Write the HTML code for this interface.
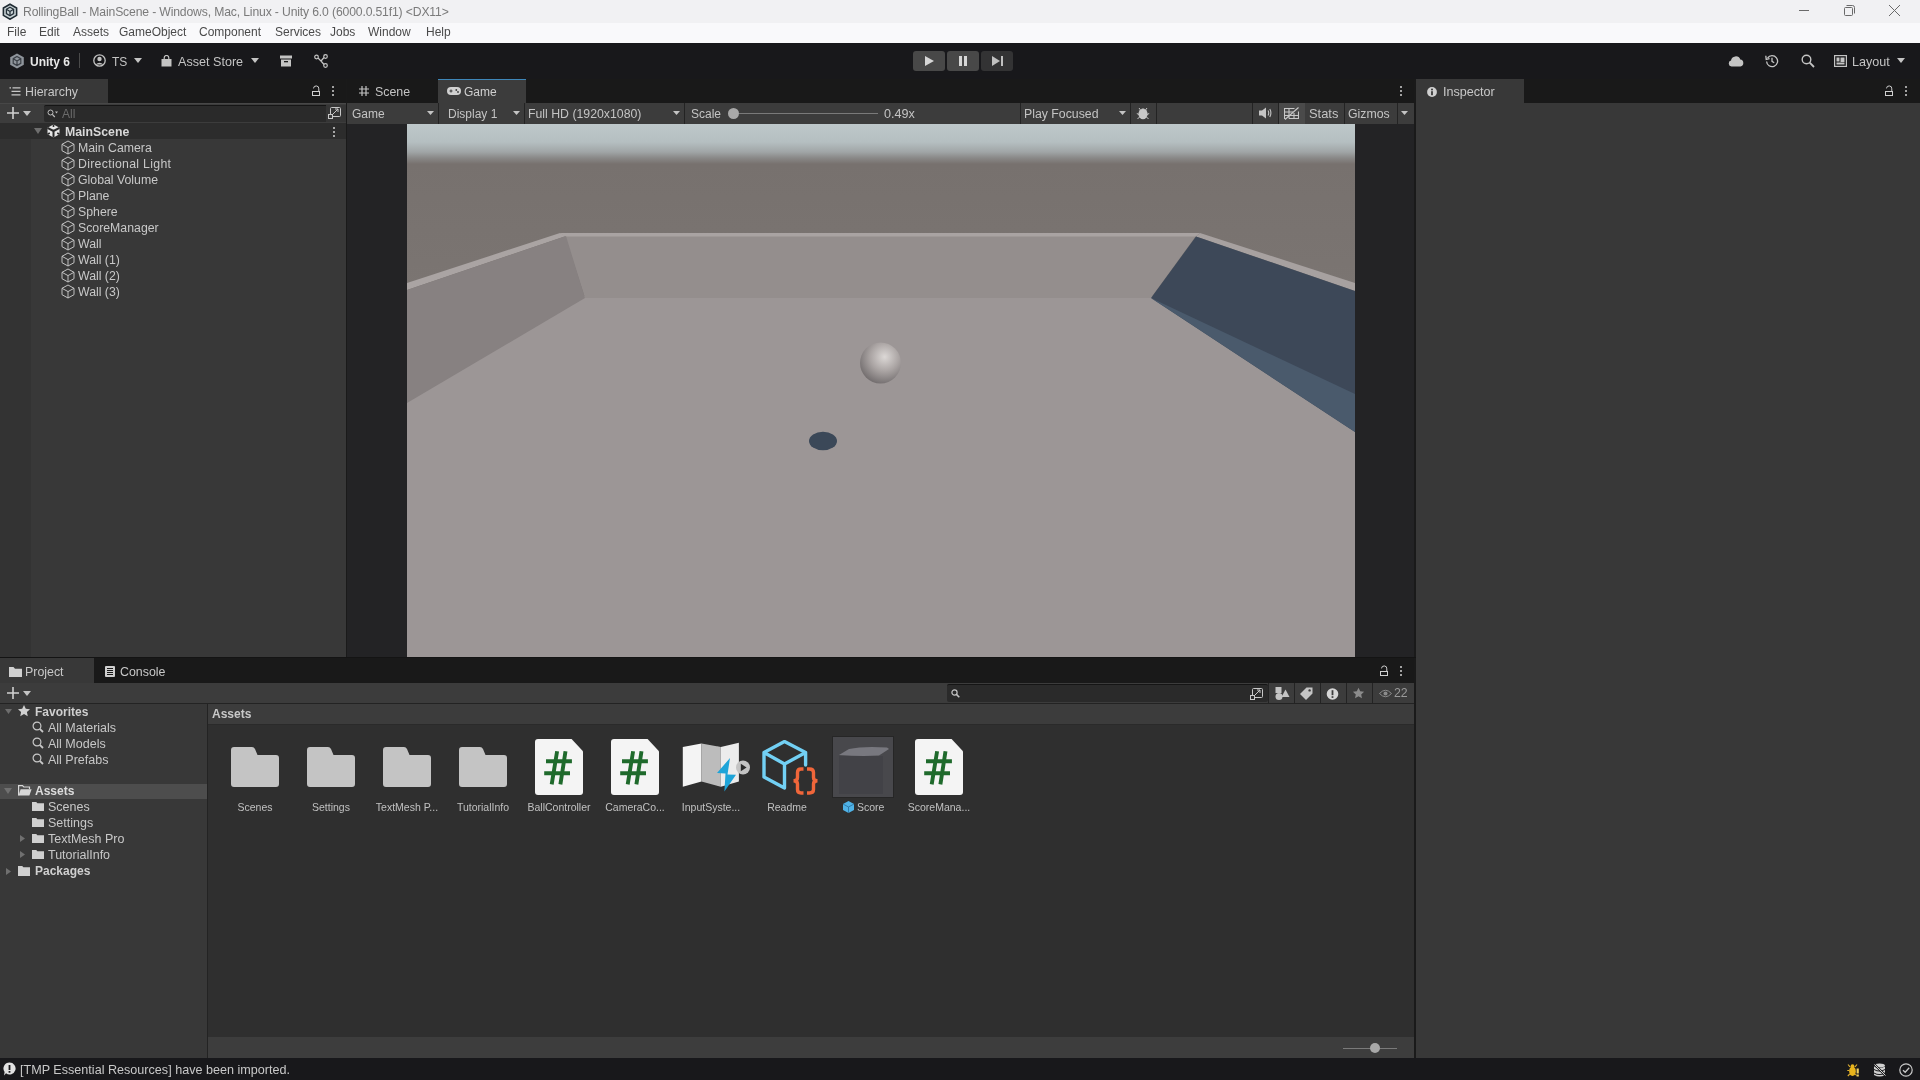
<!DOCTYPE html>
<html><head><meta charset="utf-8">
<style>
*{box-sizing:border-box;margin:0;padding:0}
html,body{-webkit-font-smoothing:antialiased;width:1920px;height:1080px;overflow:hidden;background:#191919;font-family:"Liberation Sans",sans-serif;font-size:12.5px;color:#c8c8c8}
.a{position:absolute}
.t{position:absolute;white-space:pre;line-height:14px;will-change:transform}
#title{left:0;top:0;width:1920px;height:23px;background:#f1f1f3}
#menu{left:0;top:23px;width:1920px;height:20px;background:#f9f9fb}
#toolbar{left:0;top:43px;width:1920px;height:36px;background:#18181b}
.tab{position:absolute;top:79px;height:24px;background:#383838}
.panelbg{background:#383838}
.tb{background:#3c3c3c}
.dots{width:2.4px;height:2.4px;border-radius:50%;background:#d0d0d0;box-shadow:0 4px 0 #d0d0d0,0 8px 0 #d0d0d0}
.sep{position:absolute;width:1px;background:#232323}
</style></head><body>
<!-- ============ TITLE BAR ============ -->
<div id="title" class="a"></div>
<svg class="a" style="left:2px;top:3px" width="16" height="17" viewBox="0 0 16 17">
 <path d="M8 1.2 L14.6 5 L14.6 12.4 L8 16.2 L1.4 12.4 L1.4 5 Z" fill="#c9d3d6" stroke="#1f2b33" stroke-width="1.6"/>
 <path d="M8 4.2 L11.6 6.3 L11.6 10.6 L8 12.7 L4.4 10.6 L4.4 6.3 Z" fill="none" stroke="#25313a" stroke-width="1.3"/>
 <path d="M8 8.5 L8 12.7 M8 8.5 L4.4 6.3 M8 8.5 L11.6 6.3" stroke="#25313a" stroke-width="1.3"/>
</svg>
<div class="t" style="left:23px;top:5px;font-size:12.2px;letter-spacing:-0.15px;color:#7a7a7a">RollingBall - MainScene - Windows, Mac, Linux - Unity 6.0 (6000.0.51f1) &lt;DX11&gt;</div>
<div class="a" style="left:1799px;top:10px;width:10px;height:1px;background:#6a6a6a"></div>
<svg class="a" style="left:1842px;top:4px" width="14" height="14" viewBox="0 0 14 14"><rect x="2.5" y="3.5" width="8" height="8" rx="1" fill="none" stroke="#6a6a6a"/><path d="M4.5 1.5 H10.5 A2 2 0 0 1 12.5 3.5 V9.5" fill="none" stroke="#6a6a6a"/></svg>
<svg class="a" style="left:1888px;top:4px" width="13" height="13" viewBox="0 0 13 13"><path d="M1 1 L12 12 M12 1 L1 12" stroke="#6a6a6a" stroke-width="1"/></svg>
<!-- ============ MENU ============ -->
<div id="menu" class="a"></div>
<div class="t" style="left:7px;top:25px;font-size:12px;color:#4a4a4a">File</div>
<div class="t" style="left:39px;top:25px;font-size:12px;color:#4a4a4a">Edit</div>
<div class="t" style="left:73px;top:25px;font-size:12px;color:#4a4a4a">Assets</div>
<div class="t" style="left:119px;top:25px;font-size:12px;color:#4a4a4a">GameObject</div>
<div class="t" style="left:199px;top:25px;font-size:12px;color:#4a4a4a">Component</div>
<div class="t" style="left:275px;top:25px;font-size:12px;color:#4a4a4a">Services</div>
<div class="t" style="left:330px;top:25px;font-size:12px;color:#4a4a4a">Jobs</div>
<div class="t" style="left:368px;top:25px;font-size:12px;color:#4a4a4a">Window</div>
<div class="t" style="left:426px;top:25px;font-size:12px;color:#4a4a4a">Help</div>
<!-- ============ TOOLBAR ============ -->
<div id="toolbar" class="a"></div>
<svg class="a" style="left:9px;top:53px" width="16" height="16" viewBox="0 0 16 16">
 <path d="M8 0.5 L14.8 4.3 L14.8 11.7 L8 15.5 L1.2 11.7 L1.2 4.3 Z" fill="#8f959c"/>
 <path d="M8 3.5 L11.8 5.7 L11.8 10.3 L8 12.5 L4.2 10.3 L4.2 5.7 Z M8 8 L8 12.5 M8 8 L4.2 5.7 M8 8 L11.8 5.7" fill="none" stroke="#3a3f46" stroke-width="1.2"/>
</svg>
<div class="t" style="left:30px;top:55px;font-size:12px;font-weight:bold;color:#e8e8e8">Unity 6</div>
<div class="a" style="left:79px;top:53px;width:1px;height:15px;background:#4a4a4a"></div>
<svg class="a" style="left:93px;top:54px" width="13" height="13" viewBox="0 0 13 13"><circle cx="6.5" cy="6.5" r="5.7" fill="none" stroke="#c4c4c4" stroke-width="1.3"/><circle cx="6.5" cy="5" r="2.2" fill="#c4c4c4"/><path d="M2.6 10.6 Q6.5 6.8 10.4 10.6" fill="#c4c4c4"/></svg>
<div class="t" style="left:112px;top:55px;font-size:12px;color:#c4c4c4">TS</div>
<svg class="a" style="left:134px;top:58px" width="8" height="5"><path d="M0 0 H8 L4 5 Z" fill="#c4c4c4"/></svg>
<svg class="a" style="left:161px;top:55px" width="11" height="12" viewBox="0 0 11 12"><path d="M3.2 4.5 V2.8 A2.3 2.3 0 0 1 7.8 2.8 V4.5" fill="none" stroke="#c4c4c4" stroke-width="1.2"/><path d="M0.5 4 H10.5 L10.5 11.5 H0.5 Z" fill="#c4c4c4"/></svg>
<div class="t" style="left:178px;top:55px;font-size:12.6px;color:#c4c4c4">Asset Store</div>
<svg class="a" style="left:251px;top:58px" width="8" height="5"><path d="M0 0 H8 L4 5 Z" fill="#c4c4c4"/></svg>
<svg class="a" style="left:280px;top:55px" width="12" height="12" viewBox="0 0 12 12"><rect x="0" y="0.5" width="12" height="3" fill="#c4c4c4"/><rect x="1" y="4.5" width="10" height="7" fill="#c4c4c4"/><rect x="4" y="6" width="4" height="1.3" fill="#191919"/></svg>
<svg class="a" style="left:314px;top:54px" width="14" height="14" viewBox="0 0 14 14"><circle cx="2.5" cy="3" r="1.8" fill="none" stroke="#c4c4c4" stroke-width="1.2"/><circle cx="11.5" cy="2.5" r="1.8" fill="none" stroke="#c4c4c4" stroke-width="1.2"/><circle cx="11.5" cy="11.5" r="1.8" fill="none" stroke="#c4c4c4" stroke-width="1.2"/><path d="M4 4 L7 7 L10 3.5 M7 7 L10 10.5" fill="none" stroke="#c4c4c4" stroke-width="1.2"/></svg>
<!-- play buttons -->
<div class="a" style="left:913px;top:51px;width:32px;height:20px;background:#484848;border-radius:3px"></div>
<div class="a" style="left:947px;top:51px;width:32px;height:20px;background:#484848;border-radius:3px"></div>
<div class="a" style="left:981px;top:51px;width:32px;height:20px;background:#333334;border-radius:3px"></div>
<svg class="a" style="left:925px;top:56px" width="9" height="10"><path d="M0 0 L9 5 L0 10 Z" fill="#d6d6d6"/></svg>
<div class="a" style="left:959px;top:56px;width:3px;height:10px;background:#d6d6d6"></div>
<div class="a" style="left:964px;top:56px;width:3px;height:10px;background:#d6d6d6"></div>
<svg class="a" style="left:992px;top:56px" width="11" height="10"><path d="M0 0 L8 5 L0 10 Z" fill="#c0c0c0"/><rect x="9" y="0" width="2" height="10" fill="#c0c0c0"/></svg>
<!-- right toolbar -->
<svg class="a" style="left:1728px;top:55px" width="16" height="12" viewBox="0 0 16 12"><path d="M3.5 11.5 A3 3 0 0 1 3 5.6 A4.8 4.8 0 0 1 12.3 4.6 A3.5 3.5 0 0 1 12.5 11.5 Z" fill="#c4c4c4"/></svg>
<svg class="a" style="left:1765px;top:54px" width="14" height="14" viewBox="0 0 14 14"><path d="M2.6 4 A5.5 5.5 0 1 1 1.6 7.5" fill="none" stroke="#c4c4c4" stroke-width="1.3"/><path d="M0.8 1.8 L1.2 5.4 L4.6 4.6" fill="none" stroke="#c4c4c4" stroke-width="1.3"/><path d="M7 3.8 V7.3 L9.2 8.8" fill="none" stroke="#c4c4c4" stroke-width="1.3"/></svg>
<svg class="a" style="left:1801px;top:54px" width="14" height="14" viewBox="0 0 14 14"><circle cx="5.5" cy="5.5" r="4.3" fill="none" stroke="#c4c4c4" stroke-width="1.4"/><path d="M8.7 8.7 L13 13" stroke="#c4c4c4" stroke-width="1.8"/></svg>
<svg class="a" style="left:1834px;top:55px" width="13" height="12" viewBox="0 0 13 12"><rect x="0.6" y="0.6" width="11.8" height="10.8" fill="none" stroke="#c4c4c4" stroke-width="1.2"/><rect x="2.5" y="2.5" width="3" height="4" fill="#c4c4c4"/><rect x="6.5" y="2.5" width="4" height="4.5" fill="#c4c4c4"/><rect x="2.5" y="7.5" width="8" height="2" fill="#c4c4c4"/></svg>
<div class="t" style="left:1852px;top:55px;font-size:12.6px;color:#c4c4c4">Layout</div>
<svg class="a" style="left:1897px;top:58px" width="8" height="5"><path d="M0 0 H8 L4 5 Z" fill="#c4c4c4"/></svg>

<!-- ============ HIERARCHY ============ -->
<div class="tab" style="left:0;width:108px"></div>
<svg class="a" style="left:9px;top:87px" width="12" height="9" viewBox="0 0 12 9"><path d="M0.5 0.8 H2 M3.5 0.8 H11.5 M2.5 4.3 H11.5 M2.5 7.8 H11.5" stroke="#c8c8c8" stroke-width="1.3"/></svg>
<div class="t" style="left:25px;top:85px;font-size:12.4px;color:#c8c8c8">Hierarchy</div>
<svg class="a" style="left:311px;top:85px" width="10" height="12" viewBox="0 0 10 12"><path d="M2.5 3.4 A2.65 2.65 0 0 1 7.8 3.8 V6.5" fill="none" stroke="#d0d0d0" stroke-width="1"/><rect x="1.5" y="6.5" width="7" height="4" fill="none" stroke="#d0d0d0" stroke-width="1"/></svg>
<div class="a dots" style="left:332px;top:85.5px"></div>
<div class="a panelbg" style="left:0;top:103px;width:346px;height:555px"></div>
<div class="a" style="left:0;top:139px;width:31px;height:519px;background:#333333"></div>
<div class="a" style="left:0;top:103px;width:346px;height:20px;background:#3c3c3c;border-top:1px solid #474747"></div>
<div class="a" style="left:346px;top:79px;width:1px;height:579px;background:#1a1a1a"></div>
<svg class="a" style="left:7px;top:107px" width="12" height="12" viewBox="0 0 12 12"><path d="M6 0 V12 M0 6 H12" stroke="#d0d0d0" stroke-width="1.6"/></svg>
<svg class="a" style="left:23px;top:111px" width="8" height="5"><path d="M0 0 H8 L4 5 Z" fill="#c4c4c4"/></svg>
<div class="a" style="left:44px;top:105px;width:282px;height:17px;background:#2a2a2a;border-top:1px solid #151515;border-radius:2px 0 0 2px"></div>
<svg class="a" style="left:47px;top:109px" width="11" height="9" viewBox="0 0 11 9"><circle cx="3.5" cy="3.5" r="2.5" fill="none" stroke="#bdbdbd" stroke-width="1"/><path d="M5.3 5.3 L7.8 8" stroke="#bdbdbd" stroke-width="1.2"/><path d="M8 2.6 H11 L9.5 4.4 Z" fill="#bdbdbd"/></svg>
<div class="t" style="left:62px;top:107px;font-size:12px;color:#6b6b6b">All</div>
<div class="a" style="left:326px;top:105px;width:20px;height:17px;background:#353535"></div>
<svg class="a" style="left:328px;top:107px" width="13" height="12" viewBox="0 0 13 12"><rect x="2.5" y="0.5" width="10" height="9" rx="1" fill="none" stroke="#c8c8c8" stroke-width="1"/><rect x="0.5" y="7.5" width="4" height="4" fill="#3c3c3c" stroke="#c8c8c8" stroke-width="1"/><path d="M5 7 L10 2 M7 2 H10 V5" fill="none" stroke="#c8c8c8" stroke-width="1"/></svg>
<!-- scene row -->
<div class="a" style="left:0;top:123px;width:346px;height:16px;background:#2c2c2c"></div>
<svg class="a" style="left:34px;top:128px" width="8" height="6"><path d="M0 0 H8 L4 6 Z" fill="#6e6e6e"/></svg>
<svg class="a" style="left:47px;top:124px" width="13" height="14" viewBox="0 0 13 14">
 <path d="M6.5 0.5 L12.5 3.8 L12.5 10.2 L6.5 13.5 L0.5 10.2 L0.5 3.8 Z" fill="#e6e6e6"/>
 <path d="M6.5 7 V13.5 M6.5 7 L0.5 3.8 M6.5 7 L12.5 3.8" stroke="#2c2c2c" stroke-width="2"/>
 <path d="M6.5 0.5 V3 M0.5 10.2 L2.8 9 M12.5 10.2 L10.2 9" stroke="#2c2c2c" stroke-width="1.6"/>
</svg>
<div class="t" style="left:65px;top:125px;font-size:12.3px;font-weight:bold;color:#d8d8d8">MainScene</div>
<div class="a dots" style="left:333px;top:126.8px"></div>
<svg class="a" style="left:61px;top:140px" width="14" height="15" viewBox="0 0 14 15"><path d="M7 1 L13 4.3 L13 10.7 L7 14 L1 10.7 L1 4.3 Z M1 4.3 L7 7.6 L13 4.3 M7 7.6 V14" fill="none" stroke="#c8c8c8" stroke-width="0.95" stroke-linejoin="round"/></svg>
<div class="t" style="left:78px;top:141px;font-size:12.3px;color:#c8c8c8">Main Camera</div>
<svg class="a" style="left:61px;top:156px" width="14" height="15" viewBox="0 0 14 15"><path d="M7 1 L13 4.3 L13 10.7 L7 14 L1 10.7 L1 4.3 Z M1 4.3 L7 7.6 L13 4.3 M7 7.6 V14" fill="none" stroke="#c8c8c8" stroke-width="0.95" stroke-linejoin="round"/></svg>
<div class="t" style="left:78px;top:157px;font-size:12.3px;letter-spacing:0.3px;color:#c8c8c8">Directional Light</div>
<svg class="a" style="left:61px;top:172px" width="14" height="15" viewBox="0 0 14 15"><path d="M7 1 L13 4.3 L13 10.7 L7 14 L1 10.7 L1 4.3 Z M1 4.3 L7 7.6 L13 4.3 M7 7.6 V14" fill="none" stroke="#c8c8c8" stroke-width="0.95" stroke-linejoin="round"/></svg>
<div class="t" style="left:78px;top:173px;font-size:12.3px;color:#c8c8c8">Global Volume</div>
<svg class="a" style="left:61px;top:188px" width="14" height="15" viewBox="0 0 14 15"><path d="M7 1 L13 4.3 L13 10.7 L7 14 L1 10.7 L1 4.3 Z M1 4.3 L7 7.6 L13 4.3 M7 7.6 V14" fill="none" stroke="#c8c8c8" stroke-width="0.95" stroke-linejoin="round"/></svg>
<div class="t" style="left:78px;top:189px;font-size:12.3px;color:#c8c8c8">Plane</div>
<svg class="a" style="left:61px;top:204px" width="14" height="15" viewBox="0 0 14 15"><path d="M7 1 L13 4.3 L13 10.7 L7 14 L1 10.7 L1 4.3 Z M1 4.3 L7 7.6 L13 4.3 M7 7.6 V14" fill="none" stroke="#c8c8c8" stroke-width="0.95" stroke-linejoin="round"/></svg>
<div class="t" style="left:78px;top:205px;font-size:12.3px;color:#c8c8c8">Sphere</div>
<svg class="a" style="left:61px;top:220px" width="14" height="15" viewBox="0 0 14 15"><path d="M7 1 L13 4.3 L13 10.7 L7 14 L1 10.7 L1 4.3 Z M1 4.3 L7 7.6 L13 4.3 M7 7.6 V14" fill="none" stroke="#c8c8c8" stroke-width="0.95" stroke-linejoin="round"/></svg>
<div class="t" style="left:78px;top:221px;font-size:12.3px;color:#c8c8c8">ScoreManager</div>
<svg class="a" style="left:61px;top:236px" width="14" height="15" viewBox="0 0 14 15"><path d="M7 1 L13 4.3 L13 10.7 L7 14 L1 10.7 L1 4.3 Z M1 4.3 L7 7.6 L13 4.3 M7 7.6 V14" fill="none" stroke="#c8c8c8" stroke-width="0.95" stroke-linejoin="round"/></svg>
<div class="t" style="left:78px;top:237px;font-size:12.3px;color:#c8c8c8">Wall</div>
<svg class="a" style="left:61px;top:252px" width="14" height="15" viewBox="0 0 14 15"><path d="M7 1 L13 4.3 L13 10.7 L7 14 L1 10.7 L1 4.3 Z M1 4.3 L7 7.6 L13 4.3 M7 7.6 V14" fill="none" stroke="#c8c8c8" stroke-width="0.95" stroke-linejoin="round"/></svg>
<div class="t" style="left:78px;top:253px;font-size:12.3px;color:#c8c8c8">Wall (1)</div>
<svg class="a" style="left:61px;top:268px" width="14" height="15" viewBox="0 0 14 15"><path d="M7 1 L13 4.3 L13 10.7 L7 14 L1 10.7 L1 4.3 Z M1 4.3 L7 7.6 L13 4.3 M7 7.6 V14" fill="none" stroke="#c8c8c8" stroke-width="0.95" stroke-linejoin="round"/></svg>
<div class="t" style="left:78px;top:269px;font-size:12.3px;color:#c8c8c8">Wall (2)</div>
<svg class="a" style="left:61px;top:284px" width="14" height="15" viewBox="0 0 14 15"><path d="M7 1 L13 4.3 L13 10.7 L7 14 L1 10.7 L1 4.3 Z M1 4.3 L7 7.6 L13 4.3 M7 7.6 V14" fill="none" stroke="#c8c8c8" stroke-width="0.95" stroke-linejoin="round"/></svg>
<div class="t" style="left:78px;top:285px;font-size:12.3px;color:#c8c8c8">Wall (3)</div>

<!-- ============ GAME PANEL ============ -->
<svg class="a" style="left:359px;top:86px" width="10" height="10" viewBox="0 0 10 10"><path d="M3 0 V10 M7 0 V10 M0 3 H10 M0 7 H10" stroke="#c4c4c4" stroke-width="1.2"/></svg>
<div class="t" style="left:375px;top:85px;font-size:12.4px;color:#c4c4c4">Scene</div>
<div class="tab" style="left:438px;width:88px;background:#3c3c3c;border-top:1px solid #3e86b8"></div>
<svg class="a" style="left:447px;top:87px" width="14" height="8" viewBox="0 0 14 8"><rect x="0" y="0" width="14" height="8" rx="4" fill="#d0d0d0"/><path d="M2.5 4 H5.5 M4 2.5 V5.5" stroke="#3c3c3c" stroke-width="1.1"/><circle cx="9.3" cy="3" r="0.9" fill="#3c3c3c"/><circle cx="11" cy="5" r="0.9" fill="#3c3c3c"/></svg>
<div class="t" style="left:464px;top:85px;font-size:12px;color:#d0d0d0">Game</div>
<div class="a dots" style="left:1400px;top:85.5px"></div>
<div class="a tb" style="left:347px;top:103px;width:1068px;height:21px"></div>
<div class="sep" style="left:438px;top:103px;height:21px"></div>
<div class="sep" style="left:524px;top:103px;height:21px"></div>
<div class="sep" style="left:684px;top:103px;height:21px"></div>
<div class="sep" style="left:1020px;top:103px;height:21px"></div>
<div class="sep" style="left:1130px;top:103px;height:21px"></div>
<div class="sep" style="left:1156px;top:103px;height:21px"></div>
<div class="sep" style="left:1252px;top:103px;height:21px"></div>
<div class="sep" style="left:1278px;top:103px;height:21px"></div>
<div class="sep" style="left:1344px;top:103px;height:21px"></div>
<div class="sep" style="left:1397px;top:103px;height:21px"></div>
<div class="t" style="left:352px;top:107px;font-size:12px;color:#c4c4c4">Game</div>
<svg class="a" style="left:427px;top:111px" width="7" height="4"><path d="M0 0 H7 L3.5 4 Z" fill="#c4c4c4"/></svg>
<div class="t" style="left:448px;top:107px;font-size:12px;color:#c4c4c4">Display 1</div>
<svg class="a" style="left:513px;top:111px" width="7" height="4"><path d="M0 0 H7 L3.5 4 Z" fill="#c4c4c4"/></svg>
<div class="t" style="left:528px;top:107px;font-size:12.3px;color:#c4c4c4">Full HD (1920x1080)</div>
<svg class="a" style="left:673px;top:111px" width="7" height="4"><path d="M0 0 H7 L3.5 4 Z" fill="#c4c4c4"/></svg>
<div class="t" style="left:691px;top:107px;font-size:12px;color:#c4c4c4">Scale</div>
<div class="a" style="left:738px;top:113px;width:140px;height:1px;background:#7a7a7a"></div>
<div class="a" style="left:728px;top:108px;width:11px;height:11px;border-radius:50%;background:#a8a8a8"></div>
<div class="t" style="left:884px;top:107px;font-size:12.6px;color:#c4c4c4">0.49x</div>
<div class="t" style="left:1024px;top:107px;font-size:12.3px;color:#c4c4c4">Play Focused</div>
<svg class="a" style="left:1119px;top:111px" width="7" height="4"><path d="M0 0 H7 L3.5 4 Z" fill="#c4c4c4"/></svg>
<svg class="a" style="left:1136px;top:106px" width="14" height="14" viewBox="0 0 14 14"><ellipse cx="7" cy="8" rx="4.6" ry="5.2" fill="#c8c8c8"/><path d="M4.5 3.5 Q7 1.5 9.5 3.5" fill="#c8c8c8"/><path d="M3 2 L4.5 4 M11 2 L9.5 4 M0.8 7.5 L3 8.5 M13.2 7.5 L11 8.5 M1.5 13 L3.5 11 M12.5 13 L10.5 11" stroke="#c8c8c8" stroke-width="1"/></svg>
<svg class="a" style="left:1259px;top:107px" width="13" height="12" viewBox="0 0 13 12"><path d="M0 3.5 H3 L7 0.5 V11.5 L3 8.5 H0 Z" fill="#c4c4c4"/><path d="M9 3.5 Q10.5 6 9 8.5 M10.8 2 Q13 6 10.8 10" fill="none" stroke="#c4c4c4" stroke-width="1.1"/></svg>
<div class="a" style="left:1279px;top:103px;width:26px;height:21px;background:#4a4a4a"></div>
<svg class="a" style="left:1284px;top:107px" width="15" height="13" viewBox="0 0 15 13"><path d="M10.5 1.5 H0.5 V11.5 H1.5 M5 11.5 H14.5 V4.5 M0.5 5 H9 M0.5 8.5 H14.5 M5 1.5 V11.5 M10 6 V11.5" fill="none" stroke="#c8c8c8" stroke-width="1.1"/><path d="M1 12.5 L14.5 0.5" stroke="#c8c8c8" stroke-width="1.2"/></svg>
<div class="t" style="left:1309px;top:107px;font-size:12.9px;color:#c4c4c4">Stats</div>
<div class="t" style="left:1348px;top:107px;font-size:12.3px;color:#c4c4c4">Gizmos</div>
<svg class="a" style="left:1401px;top:111px" width="7" height="4"><path d="M0 0 H7 L3.5 4 Z" fill="#c4c4c4"/></svg>
<div class="a" style="left:347px;top:124px;width:1068px;height:534px;background:#232325"></div>
<div class="a" style="left:1414px;top:79px;width:2px;height:979px;background:#1a1a1a"></div>
<!-- viewport -->
<svg class="a" style="left:407px;top:124px" width="948" height="533" viewBox="407 124 948 533">
 <defs>
  <linearGradient id="sky" x1="0" y1="124" x2="0" y2="296" gradientUnits="userSpaceOnUse">
   <stop offset="0" stop-color="#bec8ca"/>
   <stop offset="0.105" stop-color="#b5bfc1"/>
   <stop offset="0.163" stop-color="#a0a5a6"/>
   <stop offset="0.198" stop-color="#898887"/>
   <stop offset="0.233" stop-color="#77716e"/>
   <stop offset="1" stop-color="#7b7572"/>
  </linearGradient>
  <radialGradient id="ball" cx="0.6" cy="0.35" r="0.7">
   <stop offset="0" stop-color="#dcd8d6"/>
   <stop offset="0.5" stop-color="#aaa4a3"/>
   <stop offset="1" stop-color="#6f6a6b"/>
  </radialGradient>
 </defs>
 <rect x="407" y="124" width="948" height="533" fill="#9c9696"/>
 <rect x="407" y="124" width="948" height="172" fill="url(#sky)"/>
 <!-- back wall face -->
 <polygon points="565,236 1196,236 1151,298 585,298" fill="#948e8d"/>
 <!-- back wall top -->
 <polygon points="560,233 1200,233 1196,236.5 565,236.5" fill="#a9a3a2"/>
 <!-- left wall top strip -->
 <polygon points="407,283 560,233 566,236 407,290" fill="#aaa4a3"/>
 <!-- left wall face -->
 <polygon points="407,290 566,236 585,298 407,403" fill="#878181"/>
 <!-- right wall top strip -->
 <polygon points="1200,233 1355,283 1355,291 1196,236.5" fill="#a7a1a0"/>
 <!-- right wall face -->
 <polygon points="1196,236.5 1355,291 1355,432 1151,298" fill="#3d4858"/>
 <polygon points="1151,298 1355,394 1355,432" fill="#4a5a6c"/>
 <!-- shadow -->
 <ellipse cx="823" cy="441" rx="14" ry="9.3" fill="#3b4858"/>
 <!-- ball -->
 <circle cx="880.5" cy="363" r="20.5" fill="url(#ball)"/>
</svg>

<!-- ============ INSPECTOR ============ -->
<div class="tab" style="left:1416px;width:108px"></div>
<svg class="a" style="left:1427px;top:87px" width="10" height="10" viewBox="0 0 10 10"><circle cx="5" cy="5" r="4.9" fill="#d0d0d0"/><rect x="4.1" y="4.2" width="1.8" height="4" fill="#383838"/><circle cx="5" cy="2.6" r="1" fill="#383838"/></svg>
<div class="t" style="left:1443px;top:85px;font-size:12.6px;color:#c8c8c8">Inspector</div>
<svg class="a" style="left:1884px;top:85px" width="10" height="12" viewBox="0 0 10 12"><path d="M2.5 3.4 A2.65 2.65 0 0 1 7.8 3.8 V6.5" fill="none" stroke="#d0d0d0" stroke-width="1"/><rect x="1.5" y="6.5" width="7" height="4" fill="none" stroke="#d0d0d0" stroke-width="1"/></svg>
<div class="a dots" style="left:1905px;top:85.5px"></div>
<div class="a panelbg" style="left:1416px;top:103px;width:504px;height:955px"></div>

<!-- ============ PROJECT ============ -->
<div class="a" style="left:0;top:657px;width:1416px;height:1px;background:#141414"></div>
<div class="tab" style="left:0;top:658px;width:94px;height:25px"></div>
<svg class="a" style="left:9px;top:667px" width="13" height="10" viewBox="0 0 13 10"><path d="M0 0 H4.5 L6 1.8 H13 V10 H0 Z" fill="#d0d0d0"/></svg>
<div class="t" style="left:25px;top:665px;font-size:12.4px;color:#c8c8c8">Project</div>
<svg class="a" style="left:105px;top:666px" width="10" height="11" viewBox="0 0 10 11"><rect x="0" y="0" width="10" height="11" rx="1" fill="#d0d0d0"/><path d="M2 2.5 H8 M2 4.5 H8 M2 6.5 H8 M2 8.5 H8" stroke="#191919" stroke-width="1"/></svg>
<div class="t" style="left:120px;top:665px;font-size:12.4px;color:#c8c8c8">Console</div>
<svg class="a" style="left:1379px;top:665px" width="10" height="12" viewBox="0 0 10 12"><path d="M2.5 3.4 A2.65 2.65 0 0 1 7.8 3.8 V6.5" fill="none" stroke="#d0d0d0" stroke-width="1"/><rect x="1.5" y="6.5" width="7" height="4" fill="none" stroke="#d0d0d0" stroke-width="1"/></svg>
<div class="a dots" style="left:1400px;top:665.5px"></div>
<div class="a tb" style="left:0;top:683px;width:1414px;height:21px;border-bottom:1px solid #232323"></div>
<svg class="a" style="left:7px;top:687px" width="12" height="12" viewBox="0 0 12 12"><path d="M6 0 V12 M0 6 H12" stroke="#d0d0d0" stroke-width="1.6"/></svg>
<svg class="a" style="left:23px;top:691px" width="8" height="5"><path d="M0 0 H8 L4 5 Z" fill="#c4c4c4"/></svg>
<div class="a" style="left:947px;top:684px;width:321px;height:18px;background:#2a2a2a;border-top:1px solid #151515;border-radius:2px"></div>
<svg class="a" style="left:951px;top:689px" width="9" height="9" viewBox="0 0 9 9"><circle cx="3.5" cy="3.5" r="2.6" fill="none" stroke="#c4c4c4" stroke-width="1.2"/><path d="M5.4 5.4 L8.3 8.3" stroke="#c4c4c4" stroke-width="1.5"/></svg>
<svg class="a" style="left:1250px;top:688px" width="13" height="12" viewBox="0 0 13 12"><rect x="2.5" y="0.5" width="10" height="9" rx="1" fill="none" stroke="#c8c8c8" stroke-width="1"/><rect x="0.5" y="7.5" width="4" height="4" fill="#2a2a2a" stroke="#c8c8c8" stroke-width="1"/><path d="M5 7 L10 2 M7 2 H10 V5" fill="none" stroke="#c8c8c8" stroke-width="1"/></svg>
<div class="sep" style="left:1268px;top:683px;height:21px"></div>
<div class="sep" style="left:1294px;top:683px;height:21px"></div>
<div class="sep" style="left:1320px;top:683px;height:21px"></div>
<div class="sep" style="left:1346px;top:683px;height:21px"></div>
<div class="sep" style="left:1372px;top:683px;height:21px"></div>
<svg class="a" style="left:1275px;top:687px" width="15" height="13" viewBox="0 0 15 13"><rect x="0.5" y="0" width="6" height="6" fill="#c4c4c4"/><circle cx="4" cy="9.5" r="3.5" fill="#c4c4c4"/><path d="M10.5 2.5 L14.5 10 H6.5 Z" fill="#c4c4c4"/></svg>
<svg class="a" style="left:1300px;top:687px" width="13" height="13" viewBox="0 0 13 13"><path d="M6.5 0.5 H12.5 V6.5 L6 13 L0 7 Z" fill="#c4c4c4"/><circle cx="9.6" cy="3.4" r="1.2" fill="#3c3c3c"/></svg>
<svg class="a" style="left:1326px;top:688px" width="13" height="12" viewBox="0 0 13 12"><circle cx="6.5" cy="6" r="5.8" fill="#d6d6d6"/><rect x="5.6" y="2.2" width="1.8" height="5" fill="#3c3c3c"/><rect x="5.6" y="8.2" width="1.8" height="1.7" fill="#3c3c3c"/></svg>
<svg class="a" style="left:1352px;top:687px" width="13" height="13" viewBox="0 0 24 24"><path d="M12 1.5 L15.1 8 L22.3 8.8 L17 13.7 L18.4 20.8 L12 17.2 L5.6 20.8 L7 13.7 L1.7 8.8 L8.9 8 Z" fill="#8c8c8c"/></svg>
<svg class="a" style="left:1379px;top:689px" width="13" height="9" viewBox="0 0 13 9"><path d="M0.5 4.5 Q6.5 -2 12.5 4.5 Q6.5 11 0.5 4.5 Z" fill="none" stroke="#8c8c8c" stroke-width="1"/><circle cx="6.5" cy="4.5" r="2" fill="#8c8c8c"/></svg>
<div class="t" style="left:1394px;top:686px;font-size:12.3px;color:#9a9a9a">22</div>
<!-- left tree -->
<div class="a panelbg" style="left:0;top:704px;width:207px;height:354px"></div>
<div class="a" style="left:207px;top:704px;width:1px;height:354px;background:#232323"></div>
<svg class="a" style="left:5px;top:709px" width="7" height="5"><path d="M0 0 H7 L3.5 5 Z" fill="#6e6e6e"/></svg>
<svg class="a" style="left:17px;top:704px" width="14" height="14" viewBox="0 0 24 24"><path d="M12 1.5 L15.1 8 L22.3 8.8 L17 13.7 L18.4 20.8 L12 17.2 L5.6 20.8 L7 13.7 L1.7 8.8 L8.9 8 Z" fill="#d0d0d0"/></svg>
<div class="t" style="left:35px;top:705px;font-size:12px;font-weight:bold;color:#d0d0d0">Favorites</div>
<svg class="a" style="left:32px;top:721px" width="12" height="12" viewBox="0 0 12 12"><circle cx="5" cy="5" r="3.9" fill="none" stroke="#c8c8c8" stroke-width="1.2"/><path d="M7.8 7.8 L11 11" stroke="#c8c8c8" stroke-width="1.8"/></svg>
<div class="t" style="left:48px;top:721px;font-size:12.5px;color:#c8c8c8">All Materials</div>
<svg class="a" style="left:32px;top:737px" width="12" height="12" viewBox="0 0 12 12"><circle cx="5" cy="5" r="3.9" fill="none" stroke="#c8c8c8" stroke-width="1.2"/><path d="M7.8 7.8 L11 11" stroke="#c8c8c8" stroke-width="1.8"/></svg>
<div class="t" style="left:48px;top:737px;font-size:12.5px;color:#c8c8c8">All Models</div>
<svg class="a" style="left:32px;top:753px" width="12" height="12" viewBox="0 0 12 12"><circle cx="5" cy="5" r="3.9" fill="none" stroke="#c8c8c8" stroke-width="1.2"/><path d="M7.8 7.8 L11 11" stroke="#c8c8c8" stroke-width="1.8"/></svg>
<div class="t" style="left:48px;top:753px;font-size:12.5px;color:#c8c8c8">All Prefabs</div>
<div class="a" style="left:0;top:784px;width:207px;height:15px;background:#4d4d4d"></div>
<svg class="a" style="left:4px;top:788px" width="8" height="6"><path d="M0 0 H8 L4 6 Z" fill="#707070"/></svg>
<svg class="a" style="left:18px;top:785px" width="14" height="11" viewBox="0 0 14 11"><path d="M0.6 10.4 V0.6 H4.5 L5.8 2 H11.5 V4" fill="none" stroke="#d8d8d8" stroke-width="1.2"/><path d="M0.6 10.4 L2.6 4.2 H13.6 L11.4 10.4 Z" fill="#d8d8d8"/></svg>
<div class="t" style="left:35px;top:784px;font-size:12px;font-weight:bold;color:#dcdcdc">Assets</div>
<svg class="a" style="left:32px;top:802px" width="12" height="9" viewBox="0 0 12 9"><path d="M0 0 H4.2 L5.4 1.3 H12 V9 H0 Z" fill="#d0d0d0"/></svg>
<div class="t" style="left:48px;top:800px;font-size:12.5px;color:#c8c8c8">Scenes</div>
<svg class="a" style="left:32px;top:818px" width="12" height="9" viewBox="0 0 12 9"><path d="M0 0 H4.2 L5.4 1.3 H12 V9 H0 Z" fill="#d0d0d0"/></svg>
<div class="t" style="left:48px;top:816px;font-size:12.5px;color:#c8c8c8">Settings</div>
<svg class="a" style="left:32px;top:834px" width="12" height="9" viewBox="0 0 12 9"><path d="M0 0 H4.2 L5.4 1.3 H12 V9 H0 Z" fill="#d0d0d0"/></svg>
<svg class="a" style="left:20px;top:835px" width="5" height="7"><path d="M0 0 L5 3.5 L0 7 Z" fill="#707070"/></svg>
<div class="t" style="left:48px;top:832px;font-size:12.5px;color:#c8c8c8">TextMesh Pro</div>
<svg class="a" style="left:32px;top:850px" width="12" height="9" viewBox="0 0 12 9"><path d="M0 0 H4.2 L5.4 1.3 H12 V9 H0 Z" fill="#d0d0d0"/></svg>
<svg class="a" style="left:20px;top:851px" width="5" height="7"><path d="M0 0 L5 3.5 L0 7 Z" fill="#707070"/></svg>
<div class="t" style="left:48px;top:848px;font-size:12.5px;color:#c8c8c8">TutorialInfo</div>
<svg class="a" style="left:6px;top:868px" width="5" height="7"><path d="M0 0 L5 3.5 L0 7 Z" fill="#707070"/></svg>
<svg class="a" style="left:18px;top:866px" width="12" height="10" viewBox="0 0 12 10"><path d="M0 0 H4.2 L5.4 1.3 H12 V10 H0 Z" fill="#d0d0d0"/></svg>
<div class="t" style="left:35px;top:864px;font-size:12px;font-weight:bold;color:#d0d0d0">Packages</div>
<!-- right grid -->
<div class="a" style="left:208px;top:704px;width:1206px;height:354px;background:#2f2f2f"></div>
<div class="a" style="left:208px;top:704px;width:1206px;height:21px;background:#3c3c3c;border-bottom:1px solid #2a2a2a"></div>
<div class="t" style="left:212px;top:707px;font-size:12px;font-weight:bold;color:#c8c8c8">Assets</div>
<div class="a" style="left:208px;top:1037px;width:1206px;height:21px;background:#3d3d3d"></div>
<div class="a" style="left:1343px;top:1048px;width:54px;height:1px;background:#7a7a7a"></div>
<div class="a" style="left:1370px;top:1043px;width:10px;height:10px;border-radius:50%;background:#a8a8a8"></div>
<svg class="a" style="left:231px;top:747px" width="48" height="40" viewBox="0 0 48 40"><path d="M3 0 H21 Q23 0 24 2 L26.5 8 H45 Q48 8 48 11 V37 Q48 40 45 40 H3 Q0 40 0 37 V3 Q0 0 3 0 Z" fill="#c4c4c4"/></svg>
<div class="t" style="left:210px;top:800px;width:90px;text-align:center;font-size:10.5px;color:#c0c0c0">Scenes</div>
<svg class="a" style="left:307px;top:747px" width="48" height="40" viewBox="0 0 48 40"><path d="M3 0 H21 Q23 0 24 2 L26.5 8 H45 Q48 8 48 11 V37 Q48 40 45 40 H3 Q0 40 0 37 V3 Q0 0 3 0 Z" fill="#c4c4c4"/></svg>
<div class="t" style="left:286px;top:800px;width:90px;text-align:center;font-size:10.5px;color:#c0c0c0">Settings</div>
<svg class="a" style="left:383px;top:747px" width="48" height="40" viewBox="0 0 48 40"><path d="M3 0 H21 Q23 0 24 2 L26.5 8 H45 Q48 8 48 11 V37 Q48 40 45 40 H3 Q0 40 0 37 V3 Q0 0 3 0 Z" fill="#c4c4c4"/></svg>
<div class="t" style="left:362px;top:800px;width:90px;text-align:center;font-size:10.5px;color:#c0c0c0">TextMesh P...</div>
<svg class="a" style="left:459px;top:747px" width="48" height="40" viewBox="0 0 48 40"><path d="M3 0 H21 Q23 0 24 2 L26.5 8 H45 Q48 8 48 11 V37 Q48 40 45 40 H3 Q0 40 0 37 V3 Q0 0 3 0 Z" fill="#c4c4c4"/></svg>
<div class="t" style="left:438px;top:800px;width:90px;text-align:center;font-size:10.5px;color:#c0c0c0">TutorialInfo</div>
<svg class="a" style="left:535px;top:739px" width="48" height="56" viewBox="0 0 48 56"><path d="M3 0 H36.6 L48 12.3 V53 Q48 56 45 56 H3 Q0 56 0 53 V3 Q0 0 3 0 Z" fill="#f4f4f4"/><path d="M22.1 12.3 L16.7 45.4 M30.5 12.3 L25.4 45.4 M11 22.2 H36.9 M9.2 34.25 H35" stroke="#1f6a2c" stroke-width="3.9"/></svg>
<div class="t" style="left:514px;top:800px;width:90px;text-align:center;font-size:10.5px;color:#c0c0c0">BallController</div>
<svg class="a" style="left:611px;top:739px" width="48" height="56" viewBox="0 0 48 56"><path d="M3 0 H36.6 L48 12.3 V53 Q48 56 45 56 H3 Q0 56 0 53 V3 Q0 0 3 0 Z" fill="#f4f4f4"/><path d="M22.1 12.3 L16.7 45.4 M30.5 12.3 L25.4 45.4 M11 22.2 H36.9 M9.2 34.25 H35" stroke="#1f6a2c" stroke-width="3.9"/></svg>
<div class="t" style="left:590px;top:800px;width:90px;text-align:center;font-size:10.5px;color:#c0c0c0">CameraCo...</div>
<svg class="a" style="left:675px;top:735px" width="76" height="60" viewBox="0 0 76 60"><path d="M7.8 12 L26.5 8.4 L26.5 46.4 L7.8 51.8 Z" fill="#f4f4f4"/><path d="M26.5 8.4 L45.8 12 L45.8 51.8 L26.5 46.4 Z" fill="#bcbcbc"/><path d="M45.8 12 L63.9 7.8 L63.9 46.4 L45.8 51.8 Z" fill="#ececec"/><path d="M55 23 L42 38 L50.5 38.5 L49.4 56.6 L61 39.8 L52.5 39.5 Z" fill="#1ea4d8"/><circle cx="68" cy="32.5" r="7" fill="#c4c4c4"/><path d="M65.8 28.8 L71.6 32.5 L65.8 36.2 Z" fill="#2a2a2a"/></svg>
<div class="t" style="left:666px;top:800px;width:90px;text-align:center;font-size:10.5px;color:#c0c0c0">InputSyste...</div>
<svg class="a" style="left:755px;top:735px" width="70" height="65" viewBox="0 0 70 65"><path d="M50.6 30 V17.5 L29.5 6.6 L9 17.5 V42 L29.5 53 M9 17.5 L29.5 29 L50.6 17.5 M29.5 29 V53" fill="none" stroke="#72d0f4" stroke-width="3.4" stroke-linejoin="round" stroke-linecap="round"/><path d="M48.5 34 H46 Q42.5 34 42.5 37.5 V42.5 Q42.5 45.8 38.5 45.8 Q42.5 45.8 42.5 49 V54.5 Q42.5 58 46 58 H48.5 M52 34 H54.5 Q58.5 34 58.5 37.5 V42.5 Q58.5 45.8 62.5 45.8 Q58.5 45.8 58.5 49 V54.5 Q58.5 58 54.5 58 H52" fill="none" stroke="#f0663a" stroke-width="3.4"/></svg>
<div class="t" style="left:742px;top:800px;width:90px;text-align:center;font-size:10.5px;color:#c0c0c0">Readme</div>
<div class="a" style="left:832px;top:736px;width:62px;height:62px;background:#262626"></div>
<div class="a" style="left:833px;top:737px;width:60px;height:60px;background:#48484c"></div>
<div class="a" style="left:839px;top:756px;width:44px;height:38px;background:#424247"></div>
<svg class="a" style="left:833px;top:737px" width="60" height="60"><path d="M6 18 L16 12 Q30 9 54 10.5 L56 12 L46 18.5 Q28 19.5 6 18 Z" fill="#78787f"/></svg>
<svg class="a" style="left:843px;top:801px" width="11" height="12" viewBox="0 0 11 12"><path d="M5.5 0 L11 3 V9 L5.5 12 L0 9 V3 Z" fill="#4fb2e6"/><path d="M0 3 L5.5 6 L11 3 M5.5 6 V12" fill="none" stroke="#2a6d9a" stroke-width="0.8"/></svg>
<div class="t" style="left:857px;top:800px;font-size:10.5px;color:#c0c0c0">Score</div>
<svg class="a" style="left:915px;top:739px" width="48" height="56" viewBox="0 0 48 56"><path d="M3 0 H36.6 L48 12.3 V53 Q48 56 45 56 H3 Q0 56 0 53 V3 Q0 0 3 0 Z" fill="#f4f4f4"/><path d="M22.1 12.3 L16.7 45.4 M30.5 12.3 L25.4 45.4 M11 22.2 H36.9 M9.2 34.25 H35" stroke="#1f6a2c" stroke-width="3.9"/></svg>
<div class="t" style="left:894px;top:800px;width:90px;text-align:center;font-size:10.5px;color:#c0c0c0">ScoreMana...</div>
<!-- ============ STATUS BAR ============ -->
<div class="a" style="left:0;top:1058px;width:1920px;height:22px;background:#18181b"></div>
<svg class="a" style="left:3px;top:1062px" width="13" height="14" viewBox="0 0 13 14"><path d="M6.5 0.5 A6 6 0 1 1 3 11.3 L1 13.5 L1.6 10 A6 6 0 0 1 6.5 0.5 Z" fill="#e0e0e0"/><rect x="5.6" y="3" width="1.8" height="5" fill="#18181b"/><rect x="5.6" y="9" width="1.8" height="1.7" fill="#18181b"/></svg>
<div class="t" style="left:20px;top:1063px;font-size:12.6px;color:#c8c8c8">[TMP Essential Resources] have been imported.</div>
<svg class="a" style="left:1847px;top:1063px" width="13" height="14" viewBox="0 0 13 14"><ellipse cx="5.5" cy="8.3" rx="3.3" ry="4.6" fill="#e9b41c"/><circle cx="5.5" cy="3.2" r="1.9" fill="#e9b41c"/><path d="M1 1.5 L3 3.8 M10 1.5 L8 3.8 M0.3 7.5 H2.5 M0.8 13 L2.8 11 M8.3 11 L9.5 12.5" stroke="#e0b030" stroke-width="1.1"/><rect x="9.6" y="5.5" width="2.2" height="5" fill="#f0d060"/><rect x="9.6" y="11.5" width="2.2" height="2" fill="#f0d060"/></svg>
<svg class="a" style="left:1873px;top:1063px" width="14" height="14" viewBox="0 0 14 14"><ellipse cx="6.5" cy="2.5" rx="5.5" ry="2" fill="#d0d0d0"/><path d="M1 3.5 V6 Q6.5 9 12 6 V3.5 Q6.5 6.5 1 3.5 Z M1 7 V9.5 Q6.5 12.5 12 9.5 V7 Q6.5 10 1 7 Z M1 10.5 V12 Q6.5 15 12 12 V10.5 Q6.5 13.5 1 10.5 Z" fill="#d0d0d0"/><path d="M1 1 L13 13" stroke="#18181b" stroke-width="2.2"/><path d="M1.5 1.5 L12.5 12.5" stroke="#d0d0d0" stroke-width="1"/></svg>
<svg class="a" style="left:1899px;top:1063px" width="14" height="14" viewBox="0 0 14 14"><circle cx="7" cy="7" r="6.2" fill="none" stroke="#c8c8c8" stroke-width="1.2"/><path d="M4 7.2 L6.2 9.3 L10.2 4.8" fill="none" stroke="#c8c8c8" stroke-width="1.3"/></svg>
</body></html>
